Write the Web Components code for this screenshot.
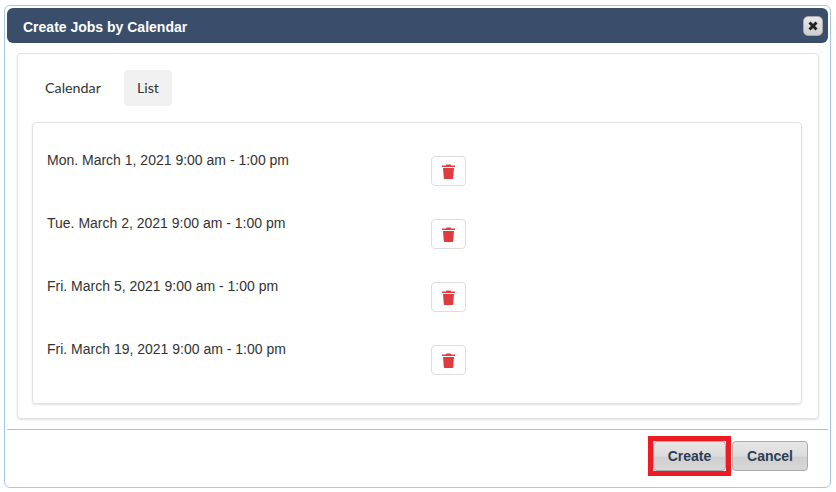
<!DOCTYPE html>
<html>
<head>
<meta charset="utf-8">
<title>Create Jobs by Calendar</title>
<style>
  html, body { margin: 0; background: #fff; }
  body { padding: 5px 0 0 4px; font-family: "Liberation Sans", Arial, sans-serif; }
</style>
</head>
<body>
<template id="job-row-tpl">
  <style>
    :host { display: flex; height: 63px; box-sizing: border-box; }
    .text { width: 384px; padding-top: 3px; font-size: 14px; line-height: 20px; color: #333; }
    button {
      width: 35px; height: 30px; margin-top: 9px; padding: 0; box-sizing: border-box;
      display: flex; align-items: center; justify-content: center;
      background: #fff; border: 1px solid #ddd; border-radius: 4px;
    }
    svg { width: 13px; height: 15px; display: block; }
  </style>
  <div class="text"><slot></slot></div>
  <button aria-label="Delete">
    <svg viewBox="0 0 13 15"><path fill="#e03c40" d="M4.500 0.500h4l.6 1H13v1.600H0V1.500h3.900zM1 4h11l-.8 10a1 1 0 0 1-1 1H2.800a1 1 0 0 1-1-1z"/></svg>
  </button>
</template>

<script>
class JobRow extends HTMLElement {
  constructor() {
    super();
    this.attachShadow({ mode: 'open' });
    this.shadowRoot.appendChild(document.getElementById('job-row-tpl').content.cloneNode(true));
  }
}

class TabBar extends HTMLElement {
  constructor() {
    super();
    this.attachShadow({ mode: 'open' }).innerHTML = `
      <style>
        :host { display: flex; gap: 10px; font-family: Lato, sans-serif; font-size: 14.3px; color: #333; }
        div { height: 36px; line-height: 36px; padding: 0 13px; border-radius: 4px; }
        .active { background: #f1f1f1; }
      </style>
      <div>Calendar</div>
      <div class="active">List</div>`;
  }
}

class DialogButton extends HTMLElement {
  constructor() {
    super();
    this.attachShadow({ mode: 'open' }).innerHTML = `
      <style>
        :host {
          display: block; position: relative; box-sizing: border-box; height: 30px;
          border: 1px solid #aaa; border-radius: 4px;
          background: linear-gradient(#e6e6e6 0%, #dcdcdc 50%, #cfcfcf 55%, #d8d8d8 100%);
          color: #2c3e56; font-weight: bold; font-size: 14px; line-height: 28px; text-align: center;
        }
        /* red annotation box drawn over the button */
        :host(.marked)::before {
          content: ""; position: absolute; inset: -6px; border: 5px solid #ed1c24;
        }
      </style>
      <slot></slot>`;
  }
}

class CalendarDialog extends HTMLElement {
  constructor() {
    super();
    this.attachShadow({ mode: 'open' }).innerHTML = `
      <style>
        :host {
          display: block; box-sizing: border-box; width: 827px; height: 483px; padding: 2px;
          border: 1px solid #a6c9e2; border-radius: 6px; background: #fff;
        }
        .title {
          height: 35px; box-sizing: border-box; padding: 3px 5px 0 16px;
          display: flex; align-items: center; justify-content: space-between;
          background: #3a4e6b; border-radius: 6px;
          color: #fff; font-weight: bold; font-size: 14px;
        }
        .close {
          width: 20px; height: 20px; margin-top: -2px; box-sizing: border-box; border-radius: 5px;
          border: 1px solid #aaa; background: linear-gradient(#e8e8e8, #cfcfcf);
          display: flex; align-items: center; justify-content: center;
        }
        .close svg { width: 10px; height: 10px; display: block; }
        .body { padding: 10px 9px 10px 10px; }
        .card {
          box-sizing: border-box; height: 366px; padding: 16px 16px 14px 14px;
          border: 1px solid #e2e2e2; border-radius: 4px; box-shadow: 0 1px 2px rgba(0,0,0,.12);
        }
        .list {
          box-sizing: border-box; height: 282px; margin-top: 16px; padding: 24px 14px 0;
          border: 1px solid #e2e2e2; border-radius: 4px; box-shadow: 0 1px 2px rgba(0,0,0,.12);
        }
        .foot {
          display: flex; justify-content: flex-end; gap: 6px;
          border-top: 1px solid #a9c1d6; padding: 11px 20px 0 0;
        }
      </style>
      <div class="title">
        <span>Create Jobs by Calendar</span>
        <span class="close"><svg viewBox="0 0 10 10"><path d="M1.500 1.500l7 7M8.500 1.500l-7 7" stroke="#222" stroke-width="3"/></svg></span>
      </div>
      <div class="body">
        <div class="card">
          <tab-bar></tab-bar>
          <div class="list"><slot></slot></div>
        </div>
      </div>
      <div class="foot">
        <dialog-button class="marked" style="width:73px">Create</dialog-button>
        <dialog-button style="width:76px">Cancel</dialog-button>
      </div>`;
  }
}

customElements.define('job-row', JobRow);
customElements.define('tab-bar', TabBar);
customElements.define('dialog-button', DialogButton);
customElements.define('calendar-dialog', CalendarDialog);
</script>

<calendar-dialog>
  <job-row>Mon. March 1, 2021 9:00 am - 1:00 pm</job-row>
  <job-row>Tue. March 2, 2021 9:00 am - 1:00 pm</job-row>
  <job-row>Fri. March 5, 2021 9:00 am - 1:00 pm</job-row>
  <job-row>Fri. March 19, 2021 9:00 am - 1:00 pm</job-row>
</calendar-dialog>
</body>
</html>
